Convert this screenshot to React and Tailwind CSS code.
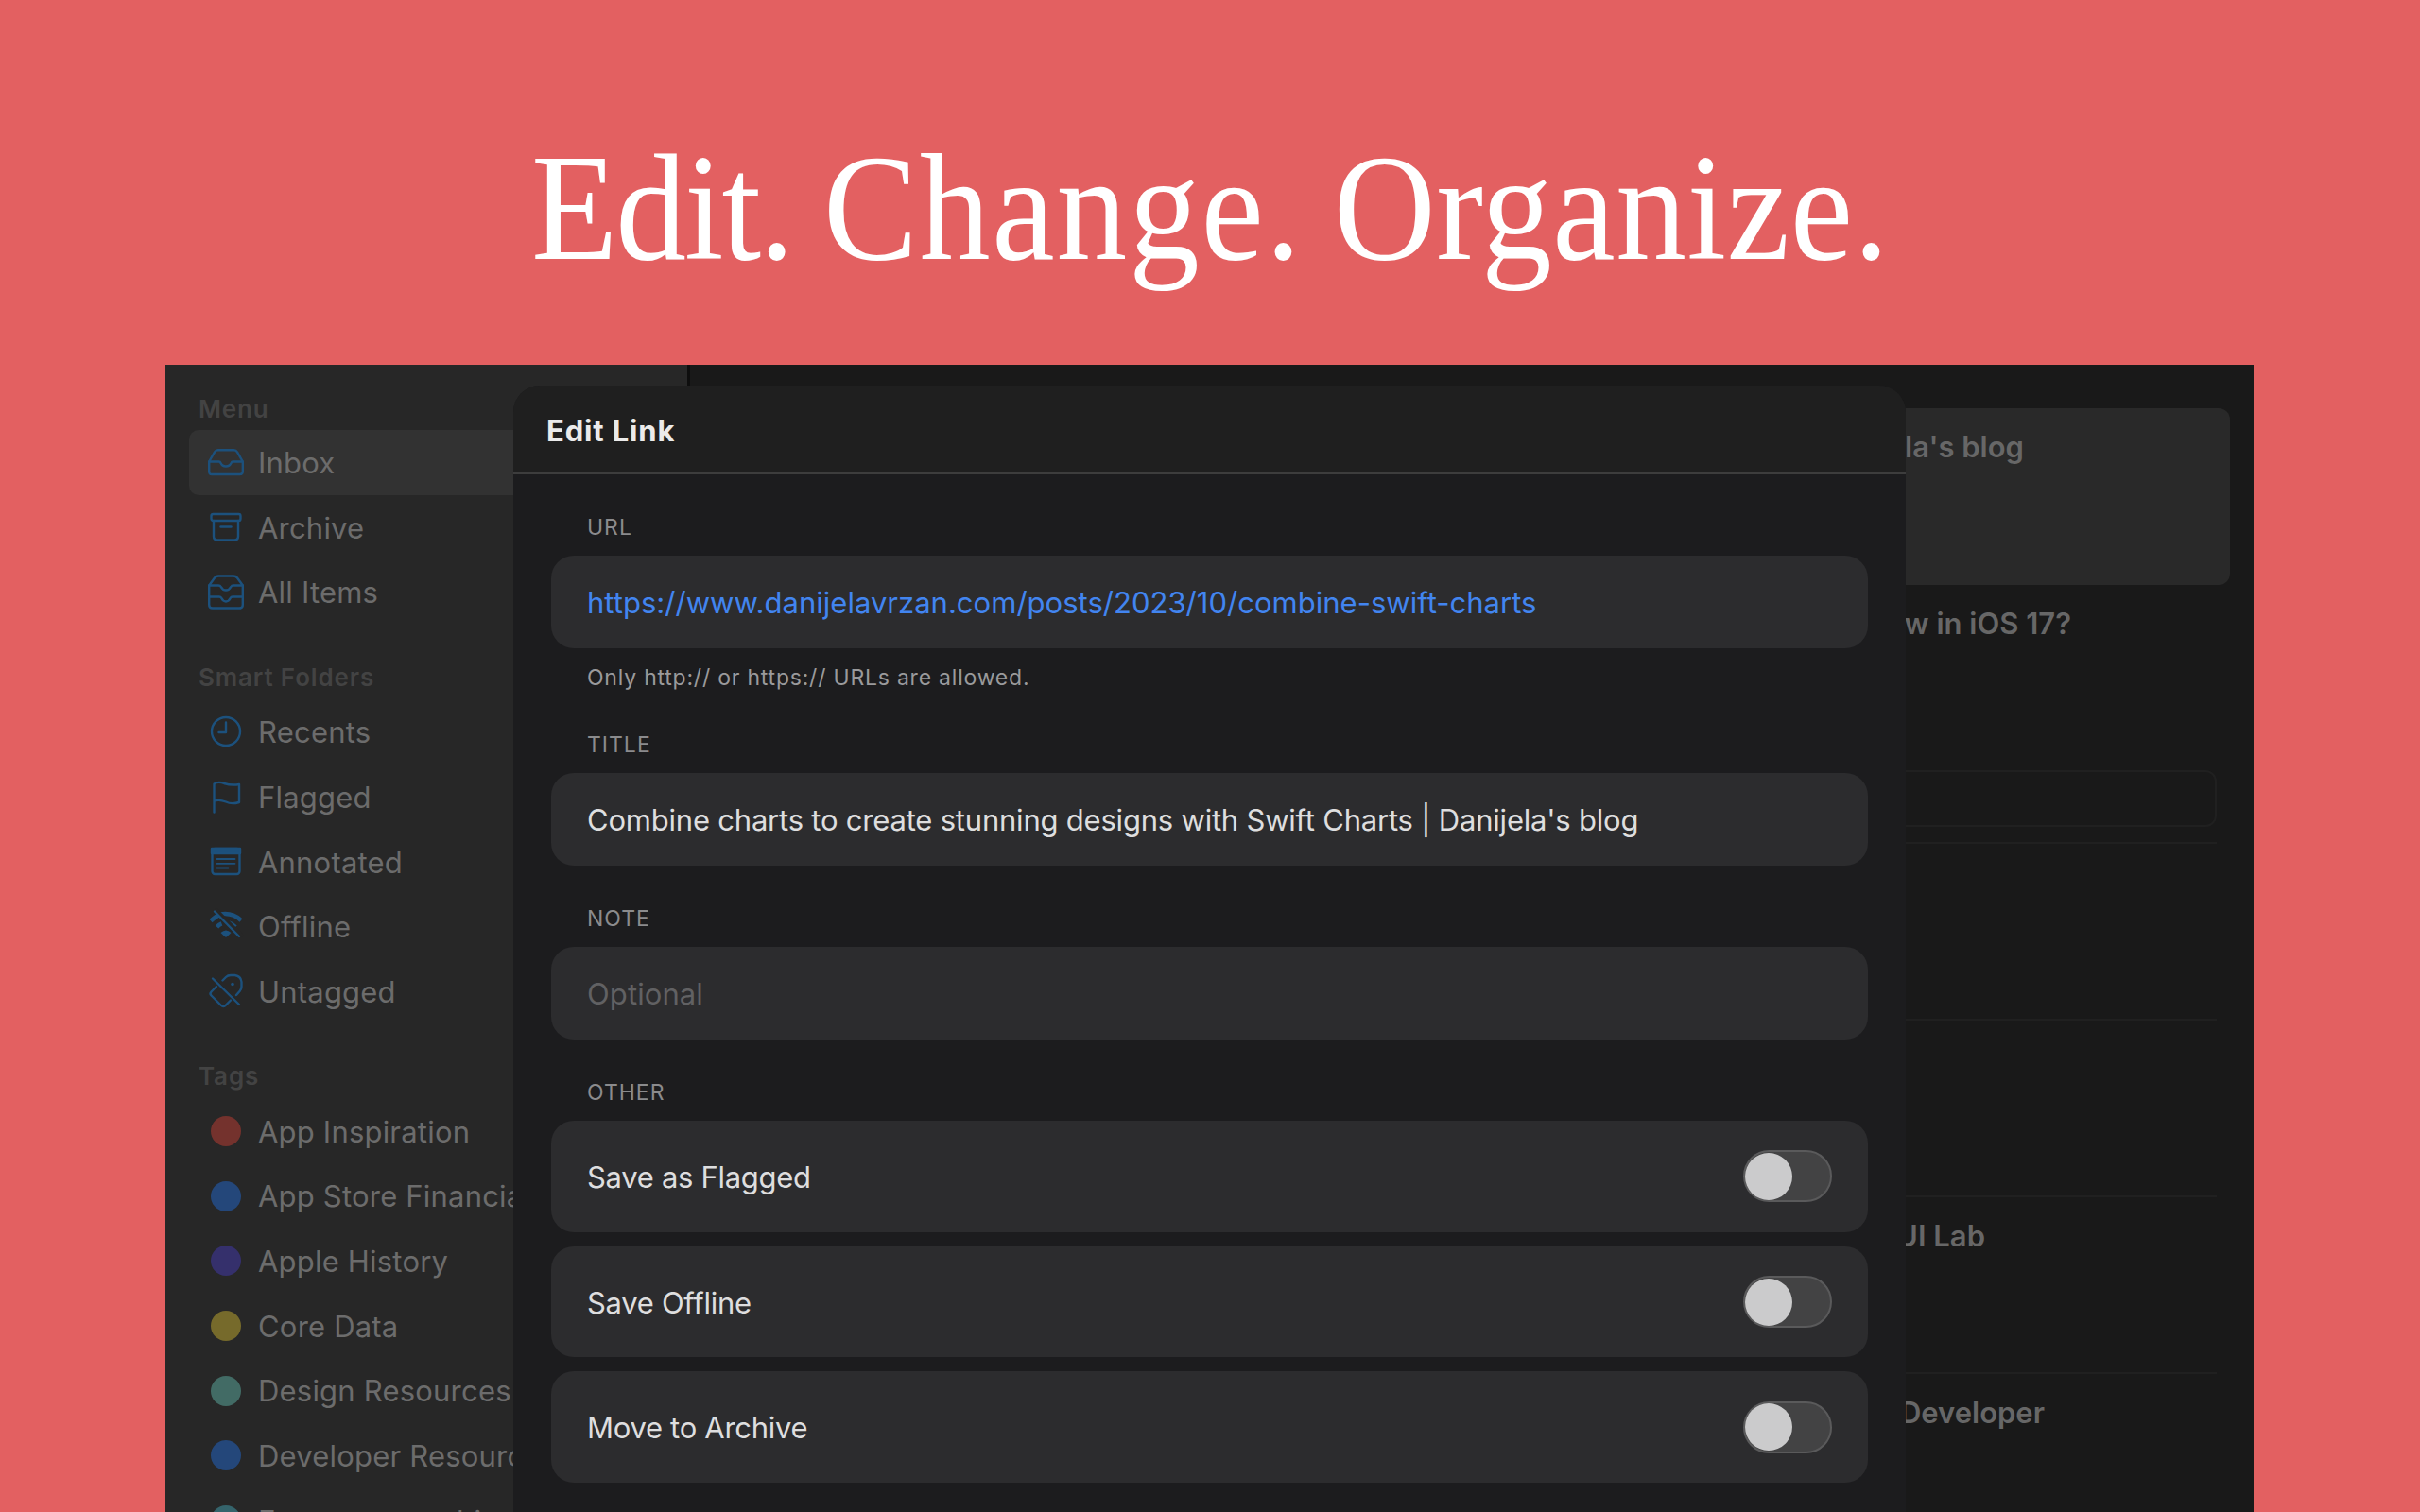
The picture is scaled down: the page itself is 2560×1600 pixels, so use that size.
const menu = [
  { label: "Inbox", icon: "inbox", active: true },
  { label: "Archive", icon: "archive" },
  { label: "All Items", icon: "tray" },
];

const smartFolders = [
  { label: "Recents", icon: "clock" },
  { label: "Flagged", icon: "flag" },
  { label: "Annotated", icon: "note" },
  { label: "Offline", icon: "wifiOff" },
  { label: "Untagged", icon: "tagOff" },
];

const tags = [
  { label: "App Inspiration", color: "bg-[#74322d]" },
  { label: "App Store Financials", color: "bg-[#24477a]" },
  { label: "Apple History", color: "bg-[#35306c]" },
  { label: "Core Data", color: "bg-[#766a2b]" },
  { label: "Design Resources", color: "bg-[#426b65]" },
  { label: "Developer Resources", color: "bg-[#24477a]" },
  { label: "Entrepreneurship", color: "bg-[#35646c]" },
];

const options = ["Save as Flagged", "Save Offline", "Move to Archive"];

const icons = {
  inbox: (
    <>
      <path d="M2.200 19.500 L8 9.300 Q9.300 7.300 11.500 7.300 H28.500 Q30.700 7.300 32 9.300 L37.800 19.500 V30 Q37.800 33 34.800 33 H5.200 Q2.200 33 2.200 30 Z" />
      <path d="M2.200 19.500 H12.500 Q14 19.500 14.500 21 Q16 24.500 20 24.500 Q24 24.500 25.500 21 Q26 19.500 27.500 19.500 H37.800" />
    </>
  ),
  archive: (
    <>
      <rect x="4.500" y="6" width="31" height="7" rx="2" />
      <path d="M7 13 V29.500 Q7 33.500 11 33.500 H29 Q33 33.500 33 29.500 V13" />
      <path d="M14.500 19.500 H25.500" />
    </>
  ),
  tray: (
    <>
      <path d="M2.200 12.500 L8 4.500 Q9.500 2.500 12 2.500 H28 Q30.500 2.500 32 4.500 L37.800 12.500 V33 Q37.800 36.500 34.300 36.500 H5.700 Q2.200 36.500 2.200 33 Z" />
      <path d="M2.200 12.500 H12 Q14 12.500 14.800 14 Q16.500 17.500 20 17.500 Q23.500 17.500 25.200 14 Q26 12.500 28 12.500 H37.800" />
      <path d="M2.200 24.500 H13 Q14.500 24.500 15.200 25.800 Q17 29.500 20 29.500 Q23 29.500 24.800 25.800 Q25.500 24.500 27 24.500 H37.800" />
    </>
  ),
  clock: (
    <>
      <circle cx="20" cy="20" r="15" />
      <path d="M20 10.500 V21 H12.500" />
    </>
  ),
  flag: (
    <path d="M7.500 36.500 V6.500 Q12 3.500 18 6 Q26 8.500 34 7 V26 Q26 28.500 20 25.500 Q12 22.500 7.500 25" />
  ),
  note: (
    <>
      <rect x="5.500" y="6" width="29" height="27" rx="3" />
      <path d="M5 6 H35 V11 H5 Z" fill="currentColor" />
      <path d="M10.500 17 H29.500 M10.500 21.800 H29.500 M10.500 26.500 H22.500" strokeWidth="1.800" />
    </>
  ),
  wifiOff: (
    <>
      <path d="M4 14.500 Q10 9 14 8 M14.500 7.500 Q27 5.500 36 14" strokeWidth="4.500" strokeLinecap="butt" />
      <path d="M10.500 21 Q12.500 18.500 15.500 17.300 M23 16.500 Q27 17.500 30 21" strokeWidth="4.500" strokeLinecap="butt" />
      <path d="M14.500 27 Q20 22 25.500 27 L21.500 31 Q20 32.300 18.500 31 Z" fill="currentColor" stroke="none" />
      <path d="M10 3.500 L36 29.500" stroke="#272727" strokeWidth="4" />
      <path d="M8 4.500 L34 31" />
    </>
  ),
  tagOff: (
    <>
      <path d="M16.500 8.500 L20 5 Q22 3 25 3 H29.500 Q36 4 36.500 10 V15 Q36.500 18 34.500 20 L31 24" />
      <path d="M10 15 L4.500 20.500 Q2.500 22.500 4.500 24.500 L15 35 Q17 37 19.500 35 L25 29.500" />
      <path d="M6 6.500 L34 34" />
      <circle cx="27" cy="12.500" r="1.800" fill="currentColor" stroke="none" />
    </>
  ),
};

function Icon({ name }) {
  return (
    <svg viewBox="0 0 40 40" className="size-10 shrink-0 text-[#1c517d]" fill="none" stroke="currentColor" strokeWidth="2.400" strokeLinecap="round" strokeLinejoin="round">
      {icons[name]}
    </svg>
  );
}

function SectionTitle({ children }) {
  return <h2 className="h-9 pl-[10px] text-[26px] leading-9 font-semibold tracking-[0.850px] text-[#434343]">{children}</h2>;
}

function MenuItem({ item }) {
  return (
    <li className={`flex h-[68.700px] items-center rounded-[10px] pl-[19px] ${item.active ? "bg-[#323232]" : ""}`}>
      <Icon name={item.icon} />
      <span className="pt-[2px] pl-[14px] whitespace-nowrap">{item.label}</span>
    </li>
  );
}

function Sidebar() {
  return (
    <aside className="w-[555px] shrink-0 overflow-hidden border-r-3 border-[#0e0e0e] bg-[#272727] pl-[25px] text-[31px] tracking-[0.200px] text-[#6c6c6c]">
      <div className="pt-[29px]">
        <SectionTitle>Menu</SectionTitle>
        <ul className="mt-1">
          {menu.map((item) => <MenuItem key={item.label} item={item} />)}
        </ul>
      </div>
      <div className="pt-[38px]">
        <SectionTitle>Smart Folders</SectionTitle>
        <ul className="mt-[5px]">
          {smartFolders.map((item) => <MenuItem key={item.label} item={item} />)}
        </ul>
      </div>
      <div className="pt-[37px]">
        <SectionTitle>Tags</SectionTitle>
        <ul className="mt-[6px]">
          {tags.map((tag) => (
            <li key={tag.label} className="flex h-[68.700px] items-center pl-[23px]">
              <span className={`size-8 shrink-0 rounded-full ${tag.color}`} />
              <span className="pt-[2px] pl-[18px] whitespace-nowrap">{tag.label}</span>
            </li>
          ))}
        </ul>
      </div>
    </aside>
  );
}

function Links() {
  return (
    <section className="flex-1 pt-[46px] pr-[25px] pl-6 text-right text-[31px] leading-10 font-semibold text-[#676767]">
      <div className="h-[187px] rounded-[12px] bg-[#292929] pt-[21px] pr-[218px]">Danijela's blog</div>
      <div className="mr-[14px] flex h-[274px] flex-col border-b-2 border-[#202020] pt-[21px]">
        <p className="pr-[154px]">new in iOS 17?</p>
        <div className="mt-auto mb-4 h-[60px] rounded-[12px] border-2 border-[#202020]" />
      </div>
      <div className="mr-[14px] h-[187px] border-b-2 border-[#202020]" />
      <div className="mr-[14px] h-[187px] border-b-2 border-[#202020]" />
      <div className="mr-[14px] h-[187px] border-b-2 border-[#202020] pt-[21px] pr-[245px]">SwiftUI Lab</div>
      <div className="mr-[14px] pt-[21px] pr-[182px]">Developer</div>
    </section>
  );
}

function Field({ label, children }) {
  return (
    <div>
      <label className="block pl-[38px] text-[23px] leading-7 tracking-[1px] text-[#8b8b8d]">{label}</label>
      <div className="mt-4 flex h-[98px] items-center rounded-[24px] bg-[#2c2c2e] pt-[3px] pl-[38px] whitespace-nowrap">{children}</div>
    </div>
  );
}

function Toggle() {
  return (
    <span className="flex h-[55px] w-[94px] items-center rounded-full border-2 border-[#5a5a5b] bg-[#434344]">
      <span className="size-[50px] rounded-full bg-[#cbcbcc]" />
    </span>
  );
}

function EditSheet() {
  return (
    <div className="absolute top-[22px] left-[368px] h-[1300px] w-[1473px] overflow-hidden rounded-[28px] bg-[#1c1c1e] text-[31px] tracking-[-0.210px] text-[#dededf]">
      <header className="flex h-[94px] items-center border-b-[3px] border-[#3d3d3d] bg-[#1f1f1f] pt-[5px] pl-[35px]">
        <h1 className="font-bold tracking-[0.850px] text-[#ebebeb]">Edit Link</h1>
      </header>
      <div className="px-10 pt-[42px]">
        <Field label="URL">
          <span className="tracking-[0.020px] text-[#4285f0]">https://www.danijelavrzan.com/posts/2023/10/combine-swift-charts</span>
        </Field>
        <p className="mt-[17px] mb-[43px] pl-[38px] text-[23px] leading-7 tracking-[0.780px] text-[#9a9a9c]">Only http:// or https:// URLs are allowed.</p>
        <div className="space-y-[42px]">
          <Field label="TITLE">Combine charts to create stunning designs with Swift Charts | Danijela's blog</Field>
          <Field label="NOTE">
            <span className="tracking-[0.100px] text-[#616163]">Optional</span>
          </Field>
        </div>
        <p className="mt-[42px] pl-[38px] text-[23px] leading-7 tracking-[1px] text-[#8b8b8d]">OTHER</p>
        <div className="mt-4 space-y-[15px]">
          {options.map((option) => (
            <div key={option} className="flex h-[117.700px] items-center justify-between rounded-[24px] bg-[#2c2c2e] pr-[38px] pl-[38px]">
              <span className="pt-[3px] tracking-[-0.300px]">{option}</span>
              <Toggle />
            </div>
          ))}
        </div>
      </div>
    </div>
  );
}

export default function App() {
  return (
    <div className="flex h-[1600px] w-[2560px] flex-col overflow-hidden bg-[#e36061] font-['Inter',sans-serif]">
      <div className="flex h-[386px] shrink-0 justify-center pt-[128px]">
        <p className="h-[200px] scale-x-[0.935] font-['Liberation_Serif',serif] text-[160px] leading-[184px] whitespace-nowrap text-white [word-spacing:-5px]">
          <span className="tracking-[-2.200px]">Edit.</span> <span className="tracking-[1.900px]">Change.</span> <span className="tracking-[0.600px]">Organize.</span>
        </p>
      </div>
      <main className="relative mr-[176px] ml-[175px] flex flex-1 overflow-hidden bg-[#191919]">
        <Sidebar />
        <Links />
        <EditSheet />
      </main>
    </div>
  );
}
